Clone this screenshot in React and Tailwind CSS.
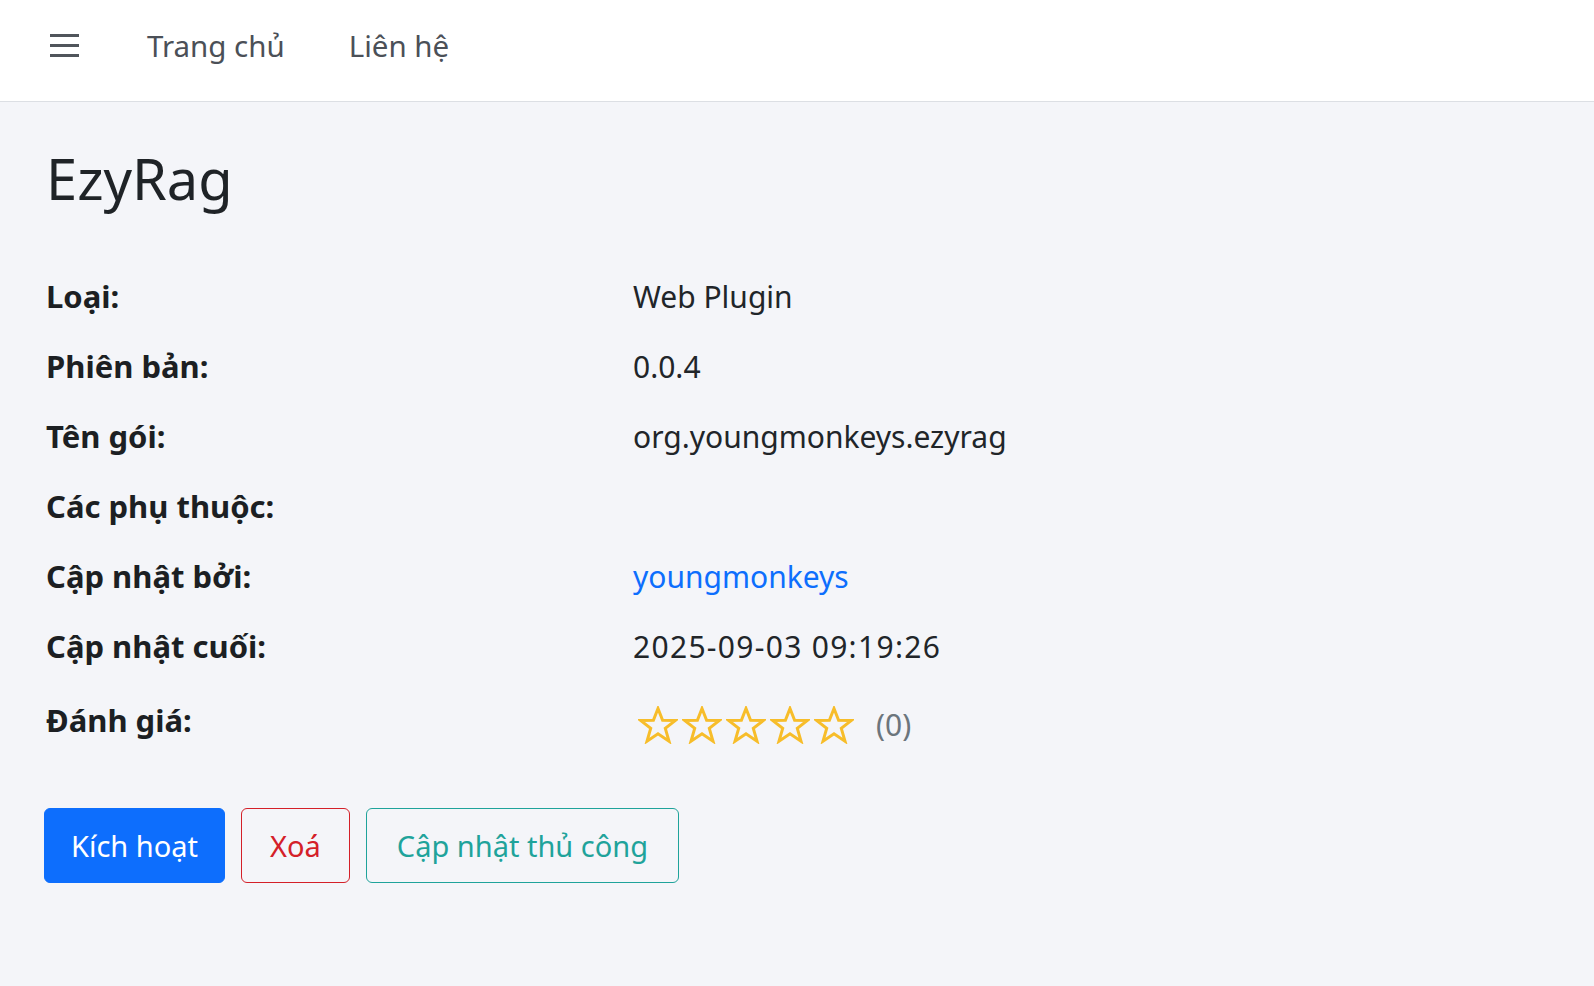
// Plugin detail page: top navbar, title, info rows and action buttons

const ROWS = [
  { label: 'Loại:', value: 'Web Plugin' },
  { label: 'Phiên bản:', value: '0.0.4' },
  { label: 'Tên gói:', value: 'org.youngmonkeys.ezyrag' },
  { label: 'Các phụ thuộc:', value: '' },
  { label: 'Cập nhật bởi:', value: 'youngmonkeys', link: true },
  { label: 'Cập nhật cuối:', value: '2025-09-03 09:19:26', wide: true },
]

const FONT = "font-['Noto_Sans','Open_Sans',sans-serif]"

function MenuIcon() {
  return (
    <svg width="29" height="25" viewBox="0 0 29 25" fill="#50555b">
      <rect x="0" y="1" width="29" height="3" />
      <rect x="0" y="11" width="29" height="3" />
      <rect x="0" y="21" width="29" height="3" />
    </svg>
  )
}

function StarOutline() {
  return (
    <svg width="40" height="38" viewBox="0 0 40 38" fill="none" stroke="#f7bd2a" strokeWidth="3" strokeLinejoin="miter">
      <polygon points="20,2.5 24.6,14.2 37.5,14.4 27.3,22.3 31,35.2 20,27.8 9,35.2 12.7,22.3 2.5,14.4 15.4,14.2" />
    </svg>
  )
}

export default function App() {
  return (
    <div className={`min-h-[986px] bg-[#f4f5f9] ${FONT} text-[#212529]`}>
      {/* navbar */}
      <nav className="h-[102px] bg-white border-b border-[#dcdfe4] flex items-center pb-[10px] pl-[50px]">
        <MenuIcon />
        <a className="ml-[68px] text-[29.5px] leading-[42px] text-[#4b5057]">Trang chủ</a>
        <a className="ml-[64px] text-[29.5px] leading-[42px] text-[#4b5057]">Liên hệ</a>
      </nav>

      <main className="pt-[42px] pl-[46px]">
        <h1 className="text-[56px] leading-[68px] font-normal text-[#1f2327]">EzyRag</h1>

        <div className="mt-[50px] flex flex-col leading-[43.5px]">
          {ROWS.map((row) => (
            <div key={row.label} className="flex items-center h-[70px]">
              <div className="w-[587px] text-[31px] font-bold text-[#1c1f23]">{row.label}</div>
              <div
                className={`text-[30px] ${row.link ? 'text-[#0d6efd]' : ''} ${row.wide ? 'tracking-[1.3px]' : ''}`}
              >
                {row.value}
              </div>
            </div>
          ))}
          <div className="flex items-center h-[78px]">
            <div className="w-[587px] text-[31px] font-bold text-[#1c1f23]">Đánh giá:</div>
            <div className="flex items-center pt-[8px] pl-[5px] text-[30px]">
              <div className="flex gap-[4px]">
                <StarOutline />
                <StarOutline />
                <StarOutline />
                <StarOutline />
                <StarOutline />
              </div>
              <span className="ml-[22px] text-[#6c757d]">(0)</span>
            </div>
          </div>
        </div>

        <div className="mt-[48px] -ml-[2px] flex gap-[16px] text-[29px] leading-[43.5px]">
          <button className="h-[75px] px-[26px] rounded-[6px] bg-[#0d6efd] border-[1.6px] border-[#0d6efd] text-white">
            Kích hoạt
          </button>
          <button className="h-[75px] px-[28px] rounded-[6px] border-[1.6px] border-[#d42029] text-[#d42029]">
            Xoá
          </button>
          <button className="h-[75px] px-[30px] rounded-[6px] border-[1.6px] border-[#1fa39b] text-[#1fa39b]">
            Cập nhật thủ công
          </button>
        </div>
      </main>
    </div>
  )
}
